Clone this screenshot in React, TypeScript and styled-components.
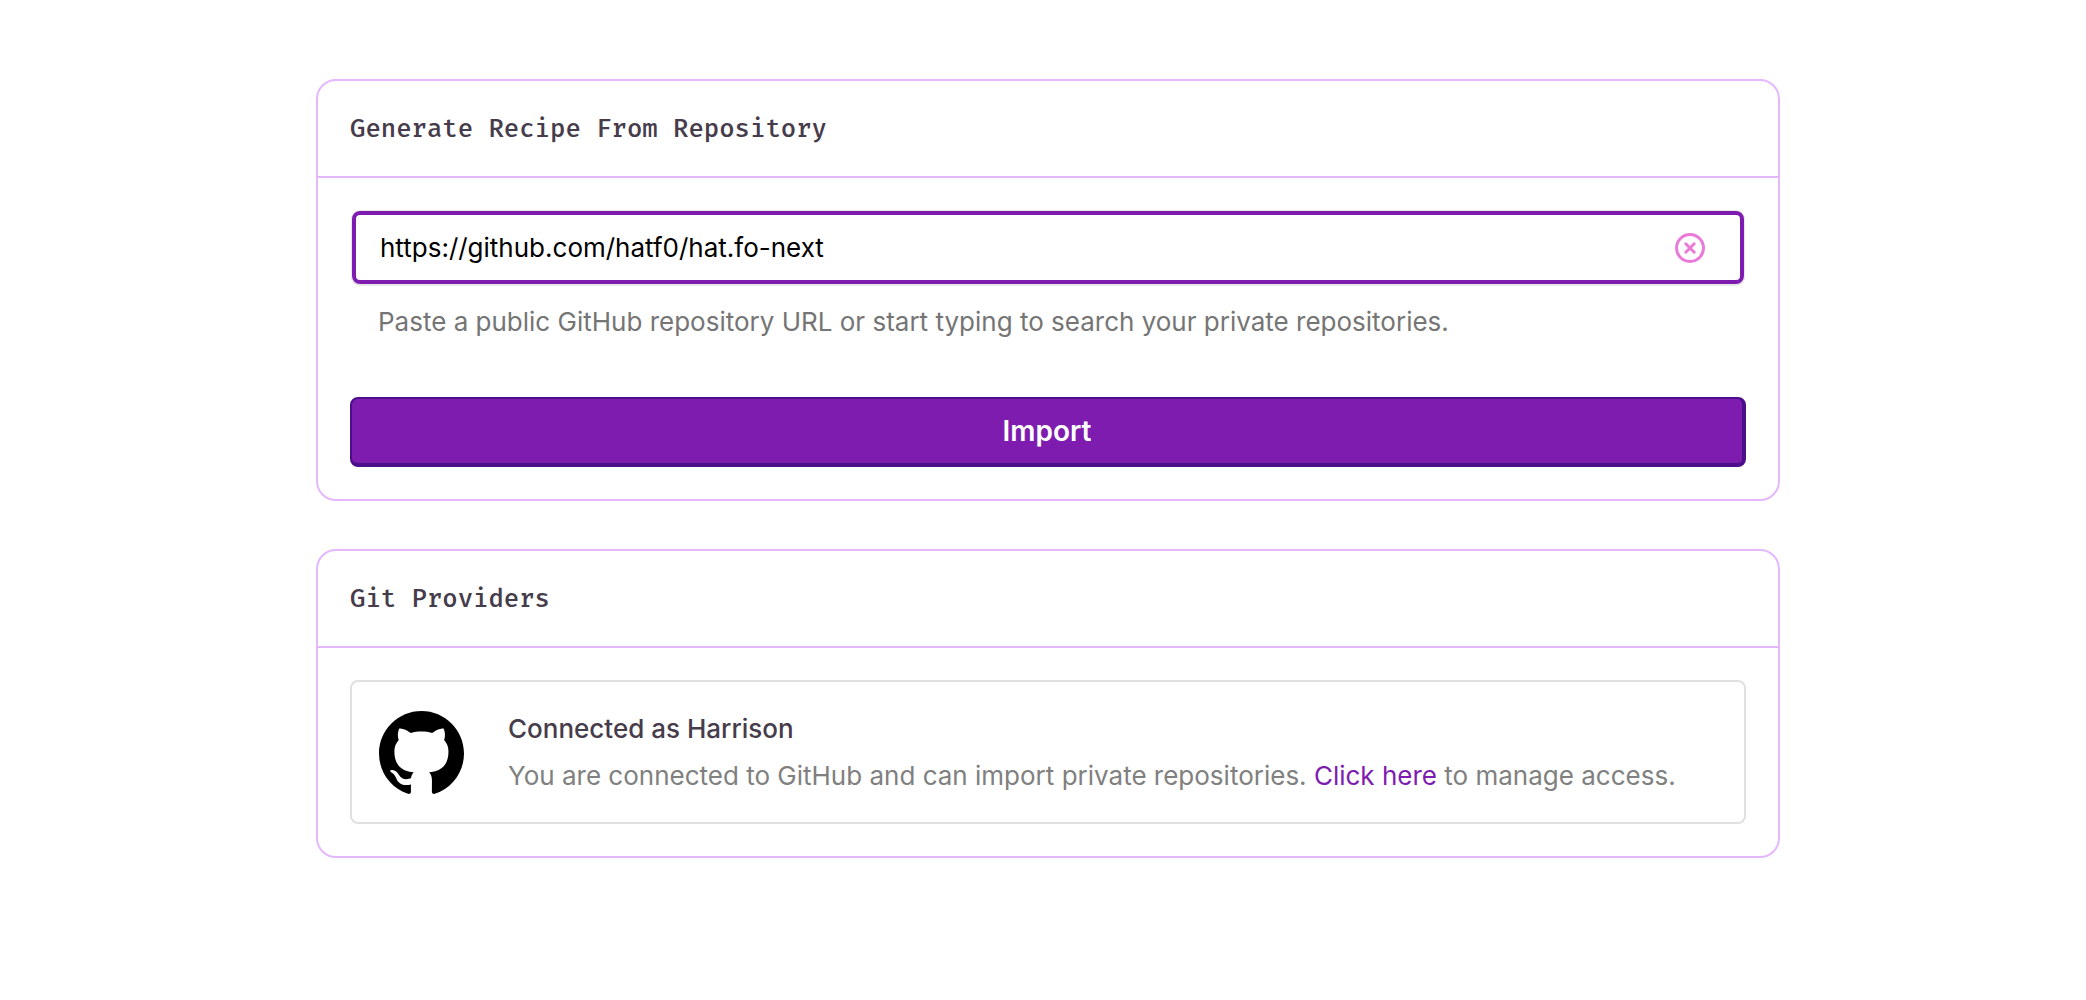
import React, { useRef, useState } from "react";
import styled, { createGlobalStyle } from "styled-components";

const GlobalStyle = createGlobalStyle`
  *, *::before, *::after { box-sizing: border-box; }
  body {
    margin: 0;
    background: #fff;
    color: #463c4b;
    font-family: Inter, "Liberation Sans", sans-serif;
    font-size: 26px;
    line-height: 40px;
  }
`;

const Page = styled.main`
  display: flex;
  flex-direction: column;
  gap: 48px;
  padding: 79px 306px 79px 316px;
`;

const Card = styled.section`
  border: 2px solid #e5b8fd;
  border-radius: 20px;
  background: #fff;
`;

const CardHeader = styled.header`
  padding: 33px 32px 30px;
  border-bottom: 2px solid #e5b8fd;
`;

const CardTitle = styled.h2`
  margin: 0;
  font-family: "Fira Code", "Fira Mono", "DejaVu Sans Mono", monospace;
  font-size: 25px;
  line-height: 32px;
  font-weight: 500;
`;

const CardBody = styled.div`
  padding: 32px;
`;

const Form = styled.form`
  display: flex;
  flex-direction: column;
`;

const Field = styled.div`
  display: flex;
  align-items: center;
  padding: 0 34px 0 24px;
  height: 73px;
  margin: 1px 2px 2px;
  border: 4px solid #7e1cb0;
  border-radius: 8px;
  box-shadow: 0 0 0 1px #e8e8e8, 0 1px 0 1px #e8e8e8;
`;

const UrlInput = styled.input`
  flex: 1;
  min-width: 0;
  padding: 0;
  border: 0;
  outline: 0;
  background: transparent;
  color: #000;
  font: inherit;
`;

const ClearButton = styled.button`
  display: flex;
  padding: 0;
  border: 0;
  background: none;
  color: #ea79d7;
  cursor: pointer;
`;

const Hint = styled.p`
  margin: 16px 0 55px;
  padding-left: 28px;
  color: #757575;
`;

const ImportButton = styled.button`
  height: 70px;
  padding: 0 24px;
  border: 2px solid #4c0f8c;
  border-right-width: 4px;
  border-bottom-width: 4px;
  border-radius: 8px;
  background: #7e1cb0;
  color: #fff;
  font: inherit;
  font-size: 28px;
  font-weight: 600;
  cursor: pointer;
`;

const Provider = styled.div`
  display: flex;
  align-items: center;
  gap: 44px;
  padding: 27px 27px 26px;
  border: 2px solid #e0e0e0;
  border-radius: 8px;
`;

const ProviderText = styled.div`
  display: flex;
  flex-direction: column;
  gap: 7px;
`;

const ProviderName = styled.h3`
  margin: 0;
  font-size: 26px;
  font-weight: 500;
`;

const ProviderInfo = styled.p`
  margin: 0;
  color: #808080;
`;

const Link = styled.a`
  color: #7e1cb0;
  text-decoration: none;
`;

const ClearIcon = () => (
  <svg width="32" height="32" viewBox="0 0 32 32" fill="none" stroke="currentColor" strokeWidth="3" strokeLinecap="round" aria-hidden="true">
    <circle cx="16" cy="16" r="13.5" />
    <path d="M11.8 11.8l8.4 8.4M20.2 11.8l-8.4 8.4" />
  </svg>
);

const GitHubMark = () => (
  <svg width="85" height="85" viewBox="0 0 24 24" fill="#000" aria-hidden="true">
    <path d="M12 .297c-6.63 0-12 5.373-12 12 0 5.303 3.438 9.8 8.205 11.385.6.113.82-.258.82-.577 0-.285-.01-1.04-.015-2.04-3.338.724-4.042-1.61-4.042-1.61C4.422 18.07 3.633 17.7 3.633 17.7c-1.087-.744.084-.729.084-.729 1.205.084 1.838 1.236 1.838 1.236 1.07 1.835 2.809 1.305 3.495.998.108-.776.417-1.305.76-1.605-2.665-.3-5.466-1.332-5.466-5.93 0-1.31.465-2.38 1.235-3.22-.135-.303-.54-1.523.105-3.176 0 0 1.005-.322 3.3 1.23.96-.267 1.98-.399 3-.405 1.02.006 2.04.138 3 .405 2.28-1.552 3.285-1.23 3.285-1.23.645 1.653.24 2.873.12 3.176.765.84 1.23 1.91 1.23 3.22 0 4.61-2.805 5.625-5.475 5.92.42.36.81 1.096.81 2.22 0 1.606-.015 2.896-.015 3.286 0 .315.21.69.825.57C20.565 22.092 24 17.592 24 12.297c0-6.627-5.373-12-12-12" />
  </svg>
);

export default function App() {
  const [url, setUrl] = useState("https://github.com/hatf0/hat.fo-next");
  const input = useRef<HTMLInputElement>(null);
  const clear = () => {
    setUrl("");
    input.current?.focus();
  };

  return (
    <>
      <GlobalStyle />
      <Page>
        <Card>
          <CardHeader>
            <CardTitle id="recipe-title">Generate Recipe From Repository</CardTitle>
          </CardHeader>
          <CardBody>
            <Form onSubmit={(e) => e.preventDefault()}>
              <Field>
                <UrlInput
                  ref={input}
                  type="text"
                  aria-labelledby="recipe-title"
                  aria-describedby="recipe-hint"
                  spellCheck={false}
                  value={url}
                  onChange={(e) => setUrl(e.target.value)}
                />
                <ClearButton type="button" aria-label="Clear" onClick={clear}>
                  <ClearIcon />
                </ClearButton>
              </Field>
              <Hint id="recipe-hint">
                Paste a public GitHub repository URL or start typing to search your private repositories.
              </Hint>
              <ImportButton type="submit">Import</ImportButton>
            </Form>
          </CardBody>
        </Card>
        <Card>
          <CardHeader>
            <CardTitle>Git Providers</CardTitle>
          </CardHeader>
          <CardBody>
            <Provider>
              <GitHubMark />
              <ProviderText>
                <ProviderName>Connected as Harrison</ProviderName>
                <ProviderInfo>
                  You are connected to GitHub and can import private repositories. <Link href="#access">Click here</Link> to manage access.
                </ProviderInfo>
              </ProviderText>
            </Provider>
          </CardBody>
        </Card>
      </Page>
    </>
  );
}
